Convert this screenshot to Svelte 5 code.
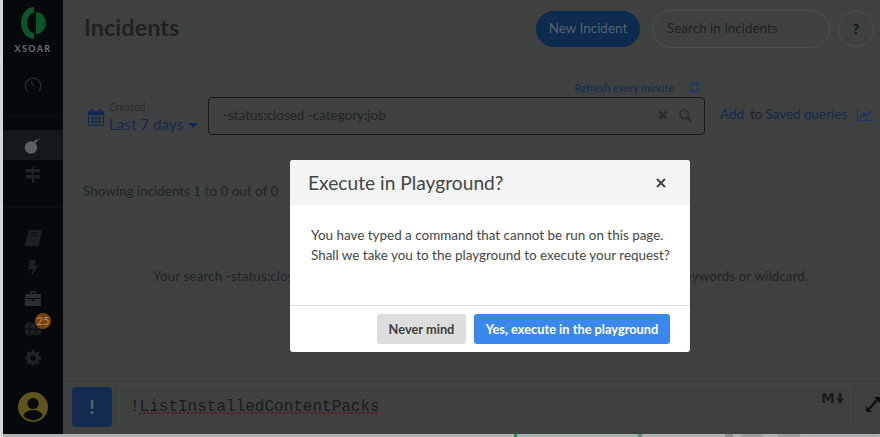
<script lang="ts">
	const navTop = [
		{ id: 'bomb', active: true },
		{ id: 'signs', active: false }
	];
	const bottomMarks = [
		{ left: 511, width: 3, color: '#2a8a52' },
		{ left: 514, width: 121, color: '#a3b2a8' },
		{ left: 635, width: 4, color: '#5c9272' },
		{ left: 722, width: 8, color: '#909293' },
		{ left: 738, width: 22, color: '#9c9e9e' },
		{ left: 775, width: 22, color: '#9c9e9e' },
		{ left: 805, width: 70, color: '#abadb1' }
	];
</script>

<div class="page">
	<aside class="sidebar">
		<div class="logo">
			<svg width="26" height="32" viewBox="0 0 26 32" aria-hidden="true">
				<path d="M14 0A13 16 0 0 0 14 32V26A7 10 0 0 1 14 6Z" fill="#0c5429" />
				<path d="M16 5A10 11 0 0 1 16 27Z" fill="#0c5429" />
			</svg>
			<span class="logo-text">XSOAR</span>
		</div>
		<div class="nav-section first">
			<svg class="nav-icon" width="18" height="16" viewBox="0 0 18 16" aria-hidden="true">
				<path d="M3.500 14.500A7.800 7.800 0 1 1 14.500 14.500" fill="none" stroke="#26292c" stroke-width="1.400" />
				<path d="M7 4.500L9.500 9" stroke="#26292c" stroke-width="1.400" />
			</svg>
		</div>
		<div class="nav-section second">
			{#each navTop as item}
				<div class="nav-row" class:active={item.active}>
					{#if item.id === 'bomb'}
						<svg width="18" height="17" viewBox="0 0 18 17" aria-hidden="true">
							<circle cx="7" cy="10.500" r="6.200" fill="#5c5e60" />
							<path d="M10.500 5.500L13 3" stroke="#5c5e60" stroke-width="2.400" />
							<path d="M13.500 3.200L16.500 1" stroke="#3b3d3e" stroke-width="1.200" />
						</svg>
					{:else}
						<svg width="16" height="16" viewBox="0 0 16 16" aria-hidden="true">
							<path d="M7 0h2v16H7Z" fill="#1d2124" />
							<path d="M1 2h14v3.500H1ZM1 8h14v3.500H1Z" fill="#1d2124" />
						</svg>
					{/if}
				</div>
			{/each}
		</div>
		<div class="nav-section third">
			<div class="nav-row small">
				<svg width="17" height="16" viewBox="0 0 17 16" aria-hidden="true">
					<path d="M4 0h13l-3 14.500a1.500 1.500 0 0 1-1.500 1.500H1.500A1.500 1.500 0 0 1 0 14Z" fill="#1d2124" />
					<path d="M6 3h7M5.500 6h7" stroke="#05090c" stroke-width="1" />
				</svg>
			</div>
			<div class="nav-row small">
				<svg width="10" height="17" viewBox="0 0 10 17" aria-hidden="true">
					<path d="M2 0h6L6 6h4L3 17l2-8H0Z" fill="#1d2124" />
				</svg>
			</div>
			<div class="nav-row small">
				<svg width="16" height="15" viewBox="0 0 16 15" aria-hidden="true">
					<path d="M5 3V1.200A1 1 0 0 1 6 .2h4a1 1 0 0 1 1 1V3h3.500A1.500 1.500 0 0 1 16 4.500V7H0V4.500A1.500 1.500 0 0 1 1.500 3ZM6.200 3h3.600V1.500H6.200ZM0 8h6.500v1.500h3V8H16v5.500A1.500 1.500 0 0 1 14.500 15h-13A1.500 1.500 0 0 1 0 13.500Z" fill="#2a2e31" />
				</svg>
			</div>
			<div class="nav-row small cubes">
				<svg width="16" height="15" viewBox="0 0 16 15" aria-hidden="true">
					<path d="M0 3l4-2 4 1.500L12 1l4 2v10l-4 2-4-1.500L4 15l-4-2Z" fill="#1c2023" />
					<path d="M5 2v13M11 2v13M0 7l4 1.500 8 0L16 7" stroke="#05090c" stroke-width=".8" fill="none" />
				</svg>
				<span class="badge">25</span>
			</div>
			<div class="nav-row small">
				<svg width="16" height="16" viewBox="0 0 16 16" aria-hidden="true">
					<circle cx="8" cy="8" r="4.500" fill="none" stroke="#1f2326" stroke-width="3.600" />
					<path d="M8 0v3M8 13v3M0 8h3M13 8h3M2.300 2.300l2.100 2.100M11.600 11.600l2.100 2.100M2.300 13.700l2.100-2.100M11.600 4.400l2.100-2.100" stroke="#1f2326" stroke-width="2.800" />
				</svg>
			</div>
		</div>
		<div class="avatar">
			<svg width="30" height="30" viewBox="0 0 30 30" aria-hidden="true">
				<circle cx="15" cy="15" r="15" fill="#5e5420" />
				<circle cx="15" cy="11.500" r="5.600" fill="#07090a" />
				<path d="M5.500 24a9.500 6 0 0 1 19 0 13 13 0 0 1-19 0Z" fill="#07090a" />
			</svg>
		</div>
	</aside>

	<main class="main">
		<header class="header">
			<h1>Incidents</h1>
			<span class="new-btn">New Incident</span>
			<span class="search-pill">Search in Incidents</span>
			<span class="help">?</span>
		</header>

		<section class="content">
			<div class="refresh">
				<span>Refresh every minute</span>
				<svg width="11" height="11" viewBox="0 0 12 12" aria-hidden="true">
					<path d="M1.500 5A4.600 4.600 0 0 1 9.500 2.800M10.500 7A4.600 4.600 0 0 1 2.500 9.200" fill="none" stroke="#1a3560" stroke-width="1.800" />
					<path d="M11 0v4.200H6.800ZM1 12V7.800h4.200Z" fill="#1a3560" />
				</svg>
			</div>
			<div class="query-row">
				<div class="date">
					<svg width="16" height="17" viewBox="0 0 16 17" aria-hidden="true">
						<path d="M3 0h2v3H3ZM11 0h2v3h-2Z" fill="#12294f" />
						<path d="M1.500 2h13a1.500 1.500 0 0 1 1.500 1.500v12a1.500 1.500 0 0 1-1.500 1.500h-13A1.500 1.500 0 0 1 0 15.500v-12A1.500 1.500 0 0 1 1.500 2ZM1 6v10h14V6Z" fill="#12294f" />
						<path d="M4.500 6v10M8 6v10M11.500 6v10M1 9.300h14M1 12.700h14" stroke="#12294f" stroke-width=".9" />
					</svg>
					<div class="date-text">
						<span class="date-label">Created</span>
						<span class="date-value">Last 7 days <i class="caret"></i></span>
					</div>
				</div>
				<div class="query-box">
					<span class="query-text">-status:closed -category:job</span>
					<svg width="10" height="10" viewBox="0 0 10 10" aria-hidden="true">
						<path d="M1.200 1.200l7.600 7.600M8.800 1.200L1.200 8.800" stroke="#2b2d2d" stroke-width="2.600" />
					</svg>
					<svg width="13" height="13" viewBox="0 0 13 13" aria-hidden="true">
						<circle cx="5.300" cy="5.300" r="4.300" fill="none" stroke="#2b2d2d" stroke-width="1.700" />
						<path d="M8.500 8.500L12.200 12.200" stroke="#2b2d2d" stroke-width="2.200" />
					</svg>
				</div>
				<div class="saved">
					<span class="link">Add</span>
					<span class="to">to</span>
					<span class="link">Saved queries</span>
					<svg width="16" height="13" viewBox="0 0 16 13" aria-hidden="true">
						<path d="M.6 0v12.400H16" fill="none" stroke="#1a3560" stroke-width="1.200" />
						<path d="M3 9.500L7 5.500l2.500 2.500L14.500 3" fill="none" stroke="#1a3560" stroke-width="1.800" />
					</svg>
				</div>
			</div>
			<p class="showing">Showing incidents 1 to 0 out of 0</p>
			<p class="empty">Your search -status:closed -category:job did not match any incidents. Try using different keywords or wildcard.</p>
		</section>

		<footer class="cli">
			<span class="cli-btn">!</span>
			<div class="cli-input">
				<span class="cli-text">!<span class="misspelled">ListInstalledContentPacks</span></span>
				<span class="md">M<svg width="8" height="11" viewBox="0 0 7 10" aria-hidden="true"><path d="M2.200 0h2.600v5H7L3.500 10 0 5h2.200Z" fill="#1a1c1c" /></svg></span>
			</div>
			<svg class="expand" width="14" height="15" viewBox="0 0 14 15" aria-hidden="true">
				<path d="M3 12L11 3" stroke="#0e1010" stroke-width="2.200" />
				<path d="M8 0h6v6ZM0 9v6h6Z" fill="#0e1010" />
			</svg>
		</footer>
		<div class="under">
			{#each bottomMarks as mark}
				<i style="left:{mark.left}px;width:{mark.width}px;background:{mark.color}"></i>
			{/each}
		</div>
	</main>

	<div class="overlay">
		<div class="modal" role="dialog">
			<div class="modal-head">
				<h2>Execute in Playground?</h2>
				<svg width="10" height="10" viewBox="0 0 10 10" aria-hidden="true">
					<path d="M1 1l8 8M9 1L1 9" stroke="#444646" stroke-width="2" />
				</svg>
			</div>
			<div class="modal-body">
				<p>You have typed a command that cannot be run on this page.</p>
				<p>Shall we take you to the playground to execute your request?</p>
			</div>
			<div class="modal-foot">
				<button class="btn-muted">Never mind</button>
				<button class="btn-primary">Yes, execute in the playground</button>
			</div>
		</div>
	</div>
</div>

<style>
	:global(body) {
		margin: 0;
	}

	.page {
		position: relative;
		display: flex;
		width: 880px;
		height: 437px;
		overflow: hidden;
		background: #3f4141;
		border-left: 3px solid #d6d7d7;
		box-sizing: border-box;
		font-family: Lato, 'Noto Sans', sans-serif;
		font-size: 13.45px;
		color: #1f2121;
	}

	.sidebar {
		display: flex;
		flex-direction: column;
		flex: none;
		width: 60px;
		background: #05090c;
	}

	.logo {
		display: flex;
		flex-direction: column;
		align-items: center;
		height: 59px;
		padding-top: 7px;
		box-sizing: border-box;
		border-bottom: 1px solid #020405;
	}

	.logo-text {
		margin-top: 4px;
		font-size: 9px;
		font-weight: 700;
		letter-spacing: 1.4px;
		line-height: 12px;
		color: #6d7072;
	}

	.nav-section {
		display: flex;
		flex-direction: column;
		align-items: stretch;
		box-sizing: border-box;
		border-bottom: 1px solid #0d1114;
	}

	.nav-section.first {
		align-items: center;
		height: 57px;
		padding-top: 18px;
	}

	.nav-section.second {
		height: 92px;
		padding-top: 14px;
	}

	.nav-section.third {
		border-bottom: 0;
		padding-top: 15px;
	}

	.nav-row {
		display: flex;
		align-items: center;
		justify-content: center;
		height: 30px;
	}

	.nav-row.active {
		background: #14181c;
	}

	.nav-row.small {
		height: 30px;
	}

	.cubes {
		position: relative;
	}

	.badge {
		position: absolute;
		top: 0;
		left: 32px;
		width: 16px;
		height: 16px;
		border-radius: 50%;
		background: #7a4108;
		color: #ad9073;
		font-size: 11px;
		line-height: 16px;
		text-align: center;
	}

	.avatar {
		display: flex;
		justify-content: center;
		margin-top: 19px;
	}

	.main {
		display: flex;
		flex-direction: column;
		flex: 1;
		min-width: 0;
	}

	.header {
		display: flex;
		align-items: center;
		height: 58px;
		padding: 0 6px 0 21px;
		box-sizing: border-box;
		border-bottom: 1px solid #444646;
	}

	h1 {
		flex: 1;
		margin: 0;
		padding-bottom: 3px;
		font-size: 23.5px;
		font-weight: 700;
		color: #1f2121;
	}

	.new-btn {
		width: 104px;
		height: 36px;
		border-radius: 18px;
		background: #0d2a4f;
		color: #56636f;
		line-height: 35px;
		text-align: center;
	}

	.search-pill {
		width: 178px;
		height: 38px;
		margin-left: 12px;
		padding-left: 14px;
		box-sizing: border-box;
		border: 1px solid #4d4f4f;
		border-radius: 19px;
		color: #1f2121;
		line-height: 35px;
	}

	.help {
		width: 36px;
		height: 36px;
		margin-left: 8px;
		box-sizing: border-box;
		border: 1px solid #4d4f4f;
		border-radius: 50%;
		font-size: 14px;
		font-weight: 900;
		line-height: 33px;
		text-align: center;
		color: #141616;
	}

	.content {
		flex: 1;
		padding: 22px 0 0 20px;
		min-height: 0;
	}

	.refresh {
		display: flex;
		align-items: center;
		justify-content: flex-end;
		gap: 15px;
		height: 14px;
		padding-right: 180px;
		font-size: 10.700px;
		color: #12294f;
	}

	.query-row {
		display: flex;
		align-items: center;
		margin-top: 3px;
	}

	.date {
		display: flex;
		align-items: center;
		flex: none;
		gap: 5px;
		width: 125px;
		padding: 3px 0 0 5px;
		box-sizing: border-box;
	}

	.date-text {
		display: flex;
		flex-direction: column;
	}

	.date-label {
		font-size: 10.500px;
		line-height: 13px;
		color: #2a2c2c;
	}

	.date-value {
		font-size: 15.200px;
		line-height: 21px;
		color: #12294f;
	}

	.caret {
		display: inline-block;
		width: 0;
		height: 0;
		margin-left: 1px;
		vertical-align: 2px;
		border: 5px solid transparent;
		border-top: 5px solid #12294f;
		border-bottom: 0;
	}

	.query-box {
		display: flex;
		align-items: center;
		flex: none;
		gap: 11px;
		width: 497px;
		height: 38px;
		padding: 0 12px 2px 14px;
		box-sizing: border-box;
		border: 1px solid #151717;
		border-radius: 4px;
	}

	.query-text {
		flex: 1;
		color: #222424;
	}

	.saved {
		display: flex;
		align-items: center;
		flex: none;
		gap: 6px;
		margin-left: 15px;
		padding-bottom: 4px;
		white-space: nowrap;
	}

	.link {
		color: #12294f;
	}

	.to {
		margin-right: -3px;
	}

	.saved svg {
		margin-left: 4px;
	}

	.showing {
		margin: 47px 0 0;
		color: #222424;
		line-height: 18px;
	}

	.empty {
		margin: 67px 0 0 70px;
		color: #222424;
		letter-spacing: 0.1px;
		line-height: 18px;
		white-space: nowrap;
	}

	.cli {
		display: flex;
		align-items: center;
		flex: none;
		height: 56px;
		padding-left: 9px;
		box-sizing: border-box;
		border-top: 1px solid #444646;
	}

	.cli-btn {
		flex: none;
		width: 40px;
		height: 40px;
		border-radius: 4px;
		background: #122b4e;
		color: #5a6068;
		font-size: 19px;
		font-weight: 900;
		line-height: 40px;
		text-align: center;
	}

	.cli-input {
		display: flex;
		justify-content: space-between;
		width: 732px;
		height: 43px;
		margin-left: 7px;
		padding: 5px 6px 0 10px;
		box-sizing: border-box;
		border: 1px solid #464848;
		border-radius: 3px;
	}

	.cli-text {
		padding-top: 7px;
		font-family: 'Liberation Mono', monospace;
		font-size: 16px;
		line-height: 18px;
		color: #1a1c1c;
	}

	.misspelled {
		text-decoration: underline dotted #5a1216;
		text-underline-offset: 2px;
	}

	.md {
		display: flex;
		align-items: center;
		gap: 1px;
		height: 14px;
		font-family: 'DejaVu Sans', sans-serif;
		font-size: 14px;
		font-weight: 700;
		line-height: 14px;
		color: #1a1c1c;
	}

	.expand {
		margin-left: 15px;
		margin-top: -5px;
	}

	.under {
		position: relative;
		flex: none;
		height: 3px;
		margin-left: -60px;
		background: #b0b2b1;
	}

	.under i {
		position: absolute;
		top: 0;
		height: 3px;
	}

	.overlay {
		position: absolute;
		top: 160px;
		left: 287px;
	}

	.modal {
		display: flex;
		flex-direction: column;
		width: 400px;
		height: 192px;
		border-radius: 3px;
		background: #fff;
		overflow: hidden;
	}

	.modal-head {
		display: flex;
		align-items: center;
		justify-content: space-between;
		flex: none;
		height: 45px;
		padding: 0 24px 0 18px;
		box-sizing: border-box;
		background: #f3f5f4;
	}

	h2 {
		margin: 0;
		font-size: 19.200px;
		font-weight: 400;
		color: #434545;
	}

	.modal-body {
		flex: 1;
		padding: 20px 20px 0 21px;
		color: #444646;
		font-size: 13.450px;
		line-height: 20px;
	}

	.modal-body p {
		margin: 0;
		white-space: nowrap;
	}

	.modal-foot {
		display: flex;
		justify-content: flex-end;
		gap: 8px;
		flex: none;
		height: 47px;
		padding: 8px 20px 0 0;
		box-sizing: border-box;
		border-top: 1px solid #dddede;
	}

	button {
		height: 30px;
		padding: 0;
		border: 0;
		border-radius: 3px;
		font-family: inherit;
		font-size: 12.800px;
		font-weight: 700;
	}

	.btn-muted {
		width: 89px;
		background: #dcdddc;
		color: #3d3f3f;
	}

	.btn-primary {
		width: 196px;
		background: #3a87ee;
		color: #fff;
	}
</style>
